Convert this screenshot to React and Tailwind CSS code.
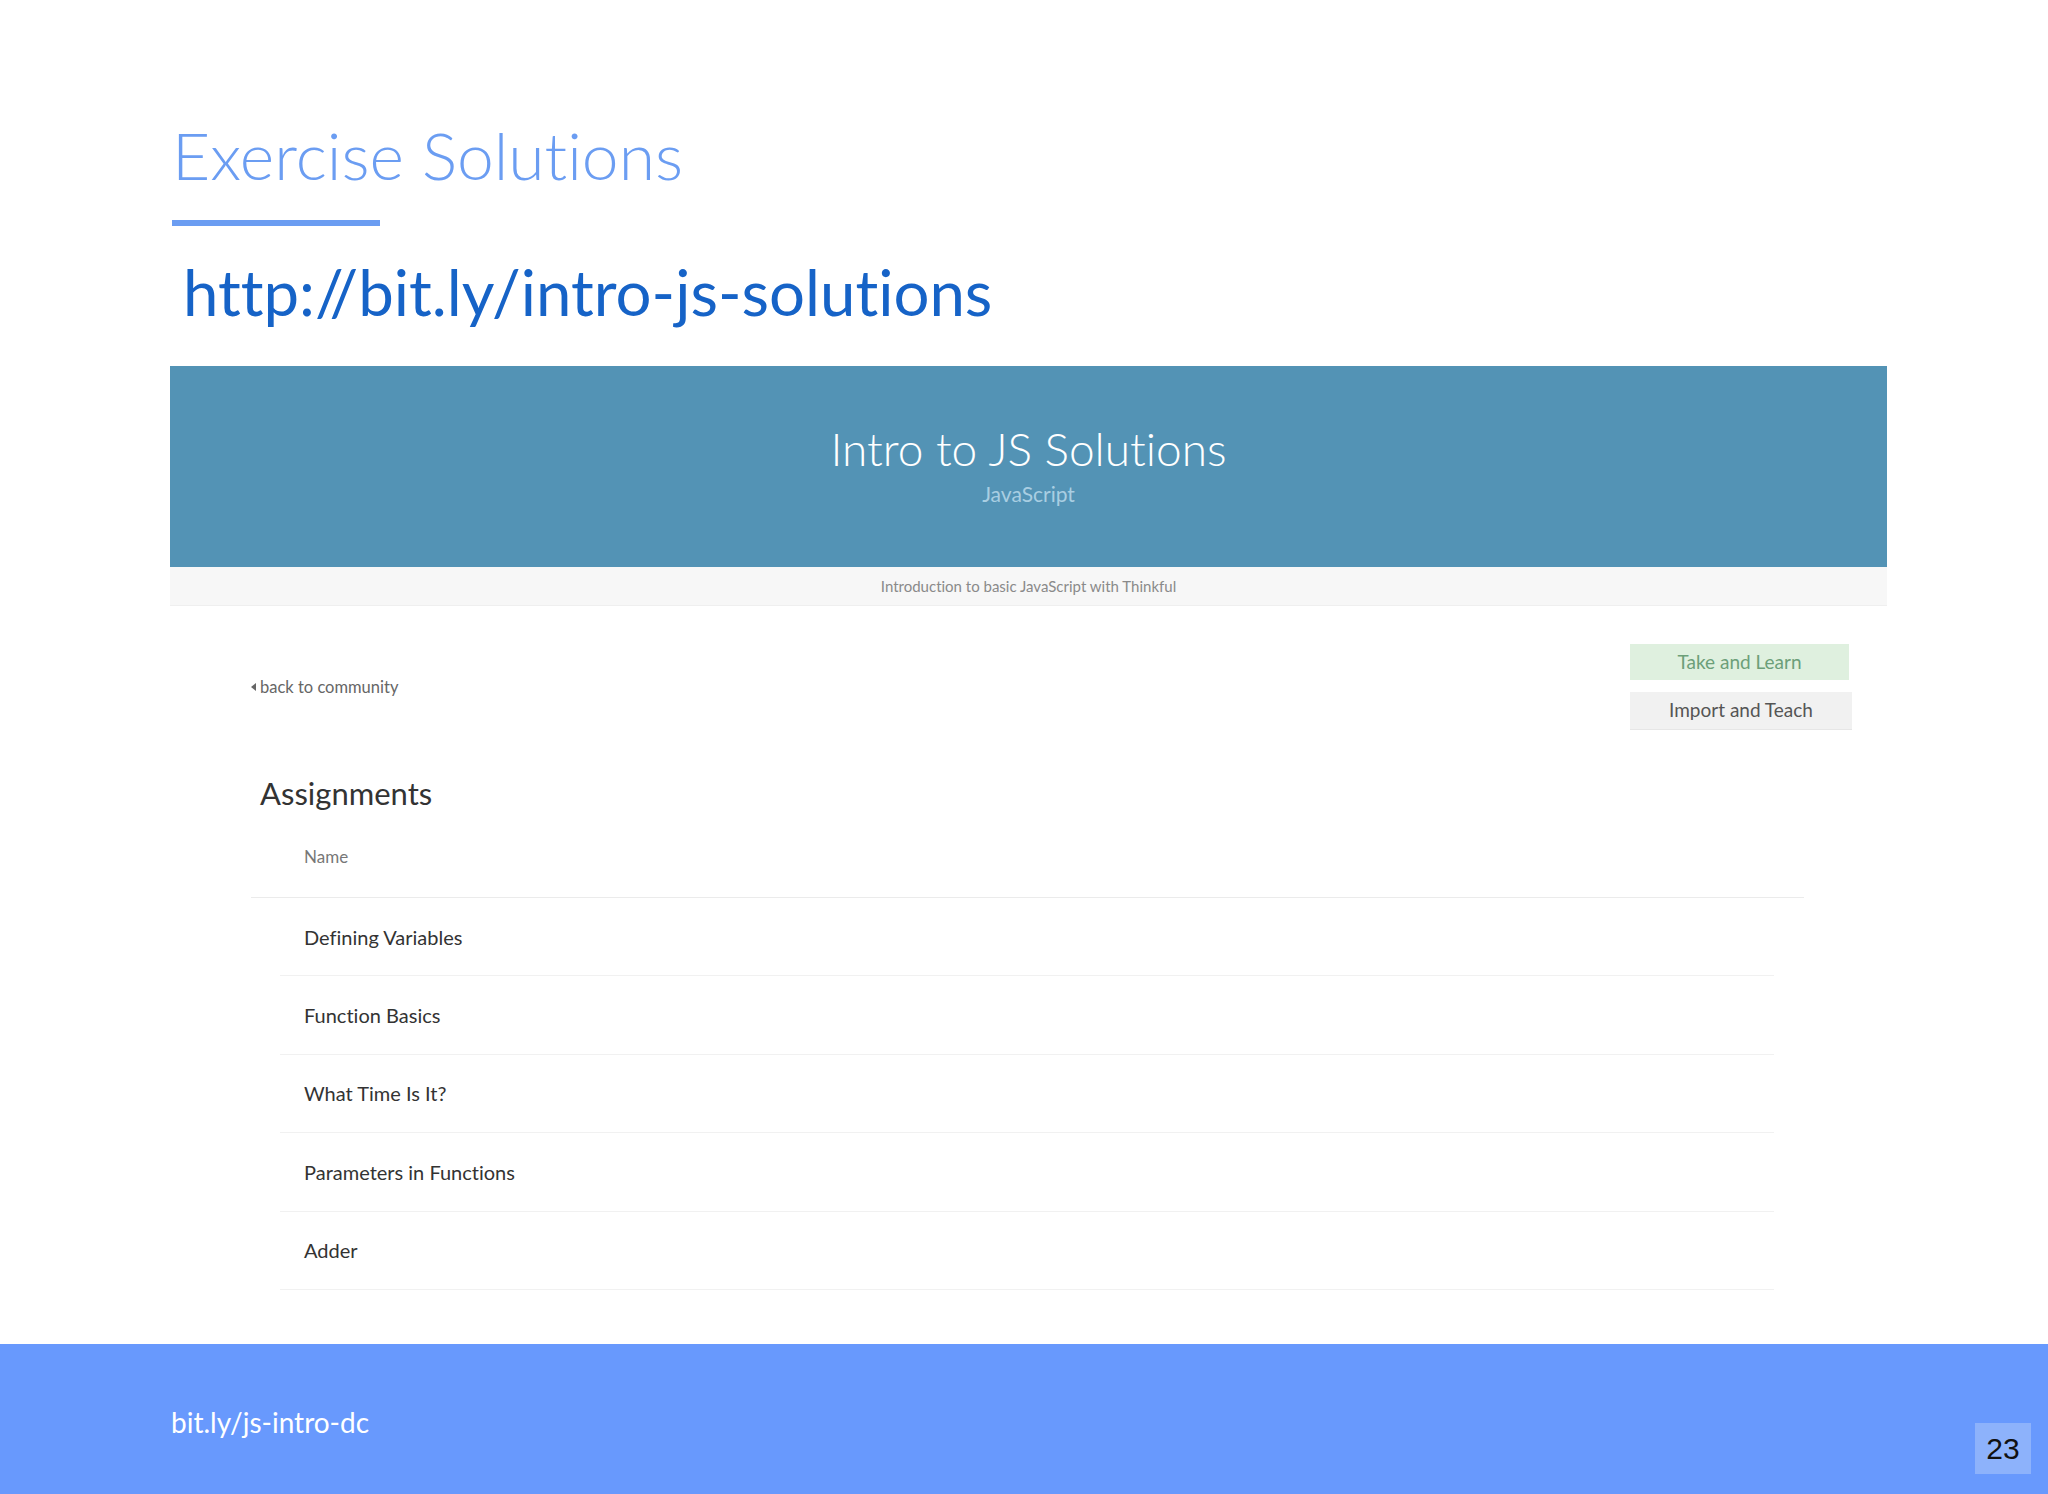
import React from "react";

const rows = [
  "Defining Variables",
  "Function Basics",
  "What Time Is It?",
  "Parameters in Functions",
  "Adder",
];

export default function App() {
  return (
    <div
      className="w-[2048px] h-[1494px] flex flex-col bg-white overflow-hidden [font-variant-ligatures:none]"
      style={{ fontFamily: "Lato, 'Open Sans', sans-serif" }}
    >
      <main className="flex-1 flex flex-col pl-[170px]">
        <h1 className="mt-[122px] ml-[2px] h-[66px] text-[66px] leading-none font-light text-[#6b9df2]">
          Exercise Solutions
        </h1>
        <div className="mt-[32px] ml-[2px] h-[6px] w-[208px] bg-[#6b9df2]" />
        <div className="mt-[34px] ml-[13px] h-[63px] text-[63.5px] leading-none text-[#1663c7]">
          http://bit.ly/intro-js-solutions
        </div>

        <section className="mt-[43px] w-[1717px] flex flex-col">
          <div className="h-[201px] bg-[#5393b5] flex flex-col items-center pt-[60px]">
            <div className="text-[46px] leading-none font-light text-white">
              Intro to JS Solutions
            </div>
            <div className="mt-[11px] text-[21px] leading-none text-[#a9cee2]">
              JavaScript
            </div>
          </div>
          <div className="h-[39px] bg-[#f7f7f7] border-b border-[#efefef] flex items-center justify-center text-[15px] text-[#8a8a8a]">
            Introduction to basic JavaScript with Thinkful
          </div>

          <div className="flex items-center pt-[38px]">
            <a className="ml-[81px] flex items-center gap-[4px] text-[16.5px] text-[#666]">
              <svg width="5" height="8" viewBox="0 0 5 8">
                <polygon points="5,0 5,8 0,4" fill="#666" />
              </svg>
              back to community
            </a>
            <div className="ml-auto mr-[35px] flex flex-col gap-[12px] w-[222px]">
              <div className="h-[36px] w-[219px] bg-[#dff0df] flex items-center justify-center text-[19px] text-[#6c9f79]">
                Take and Learn
              </div>
              <div className="h-[38px] w-[222px] bg-[#f1f1f1] border-b border-[#e6e6e6] flex items-center justify-center text-[19px] text-[#555]">
                Import and Teach
              </div>
            </div>
          </div>

          <h2 className="mt-[48px] ml-[90px] h-[31px] text-[31px] leading-none text-[#333]">
            Assignments
          </h2>

          <div className="ml-[81px] w-[1553px] h-[89px] pt-[40px] pl-[53px] border-b border-[#ebebeb] text-[17px] leading-[16px] text-[#777]">
            Name
          </div>

          <div className="ml-[110px] w-[1494px] flex flex-col">
            {rows.map((r) => (
              <div
                key={r}
                className="h-[78.4px] flex items-center pl-[24px] border-b border-[#f1f1f1] text-[20px] text-[#333]"
              >
                {r}
              </div>
            ))}
          </div>
        </section>
      </main>

      <footer className="h-[150px] shrink-0 bg-[#6899fd] flex items-start">
        <div className="ml-[171px] mt-[61px] text-[28px] leading-[34px] text-white">
          bit.ly/js-intro-dc
        </div>
        <div
          className="ml-auto mr-[17px] mt-[79px] w-[56px] h-[51px] bg-[#8db2fb] flex items-center justify-center text-[30px] text-[#111]"
          style={{ fontFamily: "'Liberation Sans', Arial, sans-serif" }}
        >
          23
        </div>
      </footer>
    </div>
  );
}
